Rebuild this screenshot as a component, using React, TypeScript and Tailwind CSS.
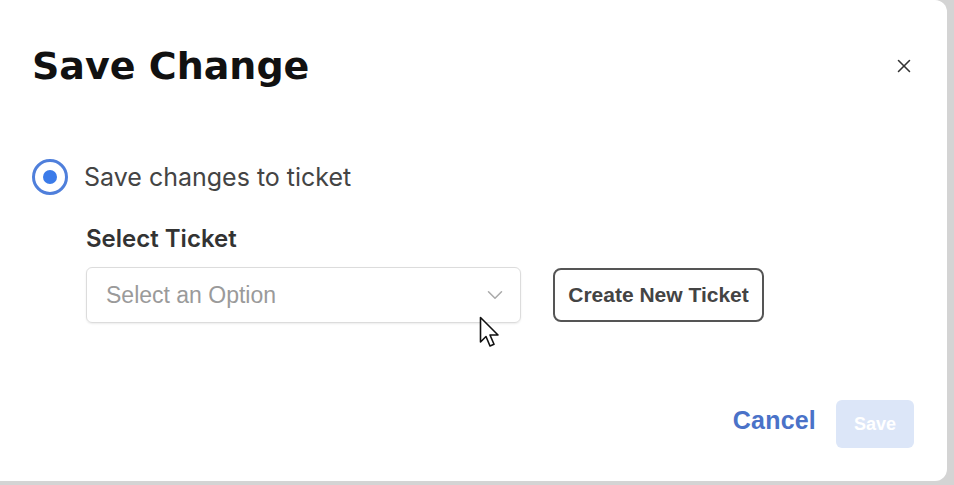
import { X, ChevronDown } from 'lucide-react';

export default function App() {
  return (
    <main className="relative flex h-[485px] w-[954px] overflow-hidden bg-[#d4d4d4] font-['Liberation_Sans',Arial,sans-serif]">
      <section className="flex h-[481px] w-[947px] flex-col rounded-r-[12px] bg-white">
        <header className="flex items-center justify-between pl-[32px] pr-[32px] pt-[40px]">
          <h1 className="font-['DejaVu_Sans',sans-serif] text-[38px] font-bold leading-[52px] tracking-[0px] text-[#111]">
            Save Change
          </h1>
          <button className="text-[#333]" aria-label="Close">
            <X size={22} strokeWidth={1.7} />
          </button>
        </header>

        <div className="mt-[67px] flex items-center gap-[16px] pl-[32px]">
          <span className="flex h-[36px] w-[36px] items-center justify-center rounded-full border-[3px] border-[#4f7fdb] bg-white">
            <span className="h-[14px] w-[14px] rounded-full bg-[#3b7be9]" />
          </span>
          <span className="font-['Inter',sans-serif] text-[25px] leading-[30px] text-[#444]">Save changes to ticket</span>
        </div>

        <div className="mt-[30px] pl-[86px]">
          <label className="block font-['Inter',sans-serif] text-[24px] font-semibold leading-[28px] text-[#333]">
            Select Ticket
          </label>
          <div className="mt-[14px] flex items-center gap-[32px]">
            <div className="flex h-[56px] w-[435px] items-center justify-between rounded-[6px] border border-[#dcdcdc] pl-[19px] pr-[12px] shadow-[0_1px_2px_rgba(0,0,0,0.08)]">
              <span className="text-[23px] text-[#9a9a9a]">Select an Option</span>
              <ChevronDown size={26} strokeWidth={1.4} className="text-[#aaa]" />
            </div>
            <button className="flex h-[54px] w-[211px] items-center justify-center rounded-[8px] border-2 border-[#555] text-[21px] font-bold text-[#444]">
              Create New Ticket
            </button>
          </div>
        </div>

        <footer className="mt-auto mb-[33px] flex items-center justify-end gap-[20px] pr-[33px]">
          <button className="pb-[6px] text-[25px] font-bold tracking-[0.2px] text-[#4a72c8]">Cancel</button>
          <button className="flex h-[48px] w-[78px] items-center justify-center rounded-[6px] bg-[#dce6f8] text-[18px] font-bold text-white">
            Save
          </button>
        </footer>
      </section>

      {/* mouse pointer */}
      <svg className="absolute left-[479px] top-[316px]" width="24" height="34" viewBox="0 0 24 34" aria-hidden="true">
        <path d="M1.5 1.5 L1.5 26 L7 20.5 L11 30 L15 28.3 L11 19 L19 19 Z" fill="white" stroke="#111" strokeWidth="1.6" strokeLinejoin="round" />
      </svg>
    </main>
  );
}
